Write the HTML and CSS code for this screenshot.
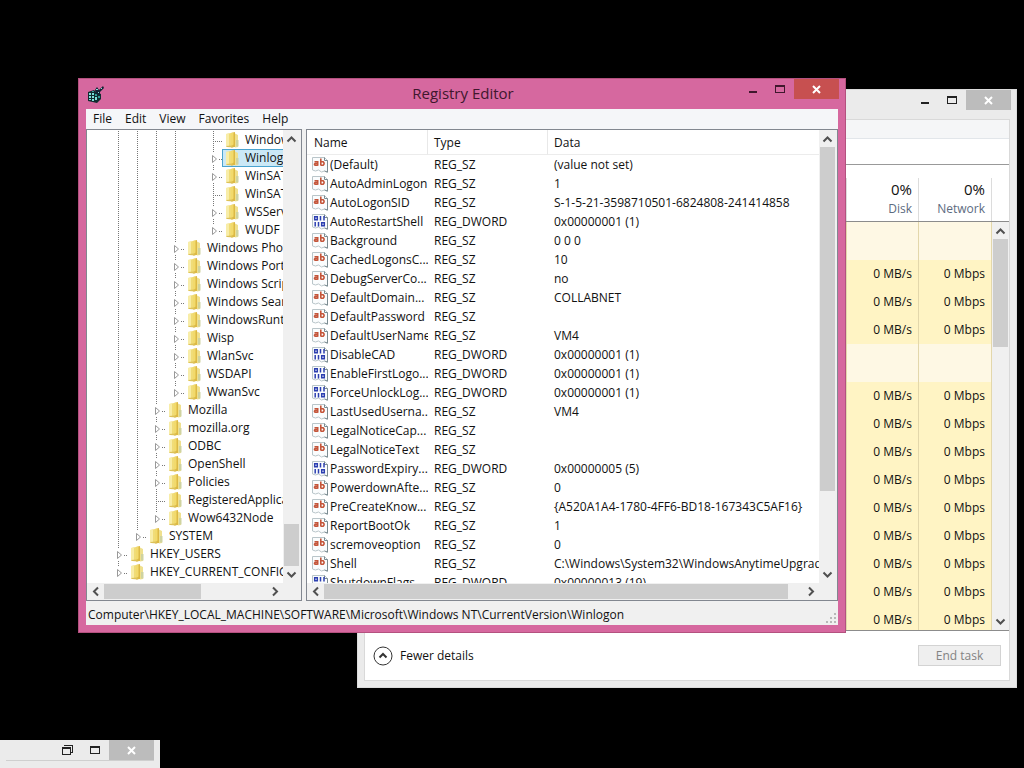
FILE: index.html
```
<!DOCTYPE html>
<html lang="en">
<head>
<meta charset="utf-8">
<title>Registry Editor</title>
<link rel="stylesheet" href="styles.css">
</head>
<body>
<svg class="defs" aria-hidden="true">
  <symbol id="folder" viewBox="0 0 16 16">
    <path d="M2 2l5-1v13l-5 .500z" fill="#f0dc78"/><path d="M2 2l3-.600v12.800l-3 .300z" fill="#f8eda8"/>
    <path d="M7 1l4-1v15l-4 .500z" fill="#dcb944"/><path d="M7 1l2.500-.500v12l-2.500 2z" fill="#f2da6c"/>
    <path d="M11 1.500l3 1.500v12l-3 .500z" fill="#efe08e"/><path d="M12 8h2.500v6.500H12z" fill="#cfd3a0"/>
    <path d="M2 14l6-.500 1 2-6-.500z" fill="#dcc159"/>
  </symbol>
  <symbol id="tri" viewBox="0 0 19 18"><path d="M5 3h10v13H5z" fill="#fff"/><path d="M9.500 6.500v7l4-3.500z" fill="#fff" stroke="#999"/></symbol>
  <symbol id="page" viewBox="0 0 16 16">
    <path d="M.5 .5h12l3 3v12l-3-1.500-3 1-3-2-3 1-3-1z" fill="#fafcfd" stroke="#b9c5c9"/>
    <path d="M12.500 .5v3h3v11.500l-3-1" fill="none" stroke="#7b8b91"/>
  </symbol>
  <symbol id="sz" viewBox="0 0 16 16"><use href="#page"/>
    <g fill="none" stroke="#c4553a" stroke-width="1.600"><path d="M2.500 4.800h3.200v4M5.700 6.500H3.200q-1.500 1 0 1.800h2.500M8.800 1.500v7M8.800 4.800h2.400q1.800 1.700 0 3.500H8.800"/></g>
  </symbol>
  <symbol id="dw" viewBox="0 0 16 16"><use href="#page"/>
    <g fill="none" stroke="#2c3fb0" stroke-width="1.500"><path d="M2.700 2.700h2.600v3H2.700zM8.500 2v4.500M12 2v4.500M3.200 8v4.500M6.500 8v4.500M9.700 8.700h2.600v3H9.700z"/></g>
  </symbol>
  <symbol id="up" viewBox="0 0 17 17"><path d="M4.500 11.500l4-4 4 4" fill="none" stroke="#505050" stroke-width="2"/></symbol>
  <symbol id="down" viewBox="0 0 17 17"><path d="M4.500 6.500l4 4 4-4" fill="none" stroke="#505050" stroke-width="2"/></symbol>
  <symbol id="left" viewBox="0 0 17 17"><path d="M11 4.500l-4 4 4 4" fill="none" stroke="#505050" stroke-width="2"/></symbol>
  <symbol id="right" viewBox="0 0 17 17"><path d="M7 4.500l4 4-4 4" fill="none" stroke="#505050" stroke-width="2"/></symbol>
  <symbol id="min" viewBox="0 0 28 20"><path d="M11 12h8v2h-8z" fill="currentColor"/></symbol>
  <symbol id="max" viewBox="0 0 28 20"><path d="M9 6h10v8H9zM10 8v5h8V8z" fill="currentColor" fill-rule="evenodd"/></symbol>
  <symbol id="restore" viewBox="0 0 28 20"><path d="M11 5h9v8h-2v-1h1V6h-8zM9 7h9v8H9zM10 9v5h7V9z" fill="currentColor" fill-rule="evenodd"/></symbol>
  <symbol id="close" viewBox="0 0 45 20"><path d="M19 7l7 7M26 7l-7 7" stroke="#fff" stroke-width="2"/></symbol>
</svg>

<section class="window task" aria-label="Task Manager">
  <header class="titlebar">
    <span></span><span></span>
    <div class="controls">
      <button aria-label="Minimize"><svg width="28" height="20"><use href="#min"/></svg></button>
      <button aria-label="Maximize"><svg width="28" height="20"><use href="#max"/></svg></button>
      <button class="close" aria-label="Close"><svg width="45" height="20"><use href="#close"/></svg></button>
    </div>
  </header>
  <div class="task-body">
    <div class="task-menu"></div>
    <div class="task-tabs"></div>
    <div class="task-head"><div></div><div><b>0%</b><span>Disk</span></div><div><b>0%</b><span>Network</span></div><div></div></div>
    <div class="task-grid">
      <div class="task-rows">
        <table class="usage">
          <colgroup><col><col class="disk"><col class="net"></colgroup>
          <tbody>
          <tr class="group"><td></td><td></td><td></td></tr>
          <tr><td></td><td>0 MB/s</td><td>0 Mbps</td></tr>
          <tr><td></td><td>0 MB/s</td><td>0 Mbps</td></tr>
          <tr><td></td><td>0 MB/s</td><td>0 Mbps</td></tr>
          <tr class="group"><td></td><td></td><td></td></tr>
          <tr><td></td><td>0 MB/s</td><td>0 Mbps</td></tr>
          <tr><td></td><td>0 MB/s</td><td>0 Mbps</td></tr>
          <tr><td></td><td>0 MB/s</td><td>0 Mbps</td></tr>
          <tr><td></td><td>0 MB/s</td><td>0 Mbps</td></tr>
          <tr><td></td><td>0 MB/s</td><td>0 Mbps</td></tr>
          <tr><td></td><td>0 MB/s</td><td>0 Mbps</td></tr>
          <tr><td></td><td>0 MB/s</td><td>0 Mbps</td></tr>
          <tr><td></td><td>0 MB/s</td><td>0 Mbps</td></tr>
          <tr><td></td><td>0 MB/s</td><td>0 Mbps</td></tr>
          </tbody>
        </table>
      </div>
      <div class="vbar"><button aria-label="Scroll up"><svg><use href="#up"/></svg></button><div class="track"><div class="thumb" style="height:29%"></div></div><button aria-label="Scroll down"><svg><use href="#down"/></svg></button></div>
    </div>
    <footer class="task-foot">
      <button class="fewer"><svg width="20" height="20" viewBox="0 0 20 20" fill="none" stroke="#333"><circle cx="10" cy="10" r="9"/><path d="M6.500 11.500L10 8l3.500 3.500" stroke-width="2"/></svg>Fewer details</button>
      <button class="end" disabled>End task</button>
    </footer>
  </div>
</section>

<section class="window reg" aria-label="Registry Editor">
  <header class="titlebar">
    <svg class="app" width="18" height="18" viewBox="0 0 18 18">
      <path d="M1 7l6-2 2 2 5 2v5l-4 4-9-2z" fill="#102c30"/>
      <path d="M2 8h2v2H2zM5 8h2v2H5zM2 11h2v2H2zM5 11h2v2H5zM2 14h2v1H2zM5 14h2v2H5zM8 12h2v3H8z" fill="#7fe0da"/>
      <path d="M5 6h2v1H5zM8 9h2v2H8zM11 11h2v2h-2z" fill="#2f9c98"/>
      <path d="M8 5l2-3 2 3 4-4 1 2-4 4v3l-4-1z" fill="#123"/>
      <path d="M9 4h2v1H9zM14 3h1v1h-1zM11 7h1v1h-1z" fill="#8adcd8"/>
    </svg>
    <h1>Registry Editor</h1>
    <div class="controls">
      <button aria-label="Minimize"><svg width="28" height="20"><use href="#min"/></svg></button>
      <button aria-label="Maximize"><svg width="28" height="20"><use href="#max"/></svg></button>
      <button class="close" aria-label="Close"><svg width="45" height="20"><use href="#close"/></svg></button>
    </div>
  </header>
  <nav class="menu"><button>File</button><button>Edit</button><button>View</button><button>Favorites</button><button>Help</button></nav>
  <main class="panes">
    <div class="pane">
      <div class="upper">
        <ul class="tree">
          <li><i></i><i></i><i></i><i></i><i class="no"></i><i class="h"></i><span><svg><use href="#folder"/></svg>Windows</span></li>
          <li><i></i><i></i><i></i><i></i><i class="no"></i><i class="x"><svg><use href="#tri"/></svg></i><span class="sel"><svg><use href="#folder"/></svg>Winlogon</span></li>
          <li><i></i><i></i><i></i><i></i><i class="no"></i><i class="x"><svg><use href="#tri"/></svg></i><span><svg><use href="#folder"/></svg>WinSAT</span></li>
          <li><i></i><i></i><i></i><i></i><i class="no"></i><i class="h"></i><span><svg><use href="#folder"/></svg>WinSATAPI</span></li>
          <li><i></i><i></i><i></i><i></i><i class="no"></i><i class="x"><svg><use href="#tri"/></svg></i><span><svg><use href="#folder"/></svg>WSService</span></li>
          <li><i></i><i></i><i></i><i></i><i class="no"></i><i class="x last"><svg><use href="#tri"/></svg></i><span><svg><use href="#folder"/></svg>WUDF</span></li>
          <li><i></i><i></i><i></i><i class="x"><svg><use href="#tri"/></svg></i><span><svg><use href="#folder"/></svg>Windows Photo Viewer</span></li>
          <li><i></i><i></i><i></i><i class="x"><svg><use href="#tri"/></svg></i><span><svg><use href="#folder"/></svg>Windows Portable Devices</span></li>
          <li><i></i><i></i><i></i><i class="x"><svg><use href="#tri"/></svg></i><span><svg><use href="#folder"/></svg>Windows Script Host</span></li>
          <li><i></i><i></i><i></i><i class="x"><svg><use href="#tri"/></svg></i><span><svg><use href="#folder"/></svg>Windows Search</span></li>
          <li><i></i><i></i><i></i><i class="x"><svg><use href="#tri"/></svg></i><span><svg><use href="#folder"/></svg>WindowsRuntime</span></li>
          <li><i></i><i></i><i></i><i class="x"><svg><use href="#tri"/></svg></i><span><svg><use href="#folder"/></svg>Wisp</span></li>
          <li><i></i><i></i><i></i><i class="x"><svg><use href="#tri"/></svg></i><span><svg><use href="#folder"/></svg>WlanSvc</span></li>
          <li><i></i><i></i><i></i><i class="x"><svg><use href="#tri"/></svg></i><span><svg><use href="#folder"/></svg>WSDAPI</span></li>
          <li><i></i><i></i><i></i><i class="x last"><svg><use href="#tri"/></svg></i><span><svg><use href="#folder"/></svg>WwanSvc</span></li>
          <li><i></i><i></i><i class="x"><svg><use href="#tri"/></svg></i><span><svg><use href="#folder"/></svg>Mozilla</span></li>
          <li><i></i><i></i><i class="x"><svg><use href="#tri"/></svg></i><span><svg><use href="#folder"/></svg>mozilla.org</span></li>
          <li><i></i><i></i><i class="x"><svg><use href="#tri"/></svg></i><span><svg><use href="#folder"/></svg>ODBC</span></li>
          <li><i></i><i></i><i class="x"><svg><use href="#tri"/></svg></i><span><svg><use href="#folder"/></svg>OpenShell</span></li>
          <li><i></i><i></i><i class="x"><svg><use href="#tri"/></svg></i><span><svg><use href="#folder"/></svg>Policies</span></li>
          <li><i></i><i></i><i class="h"></i><span><svg><use href="#folder"/></svg>RegisteredApplications</span></li>
          <li><i></i><i></i><i class="x last"><svg><use href="#tri"/></svg></i><span><svg><use href="#folder"/></svg>Wow6432Node</span></li>
          <li><i></i><i class="x last"><svg><use href="#tri"/></svg></i><span><svg><use href="#folder"/></svg>SYSTEM</span></li>
          <li><i class="x"><svg><use href="#tri"/></svg></i><span><svg><use href="#folder"/></svg>HKEY_USERS</span></li>
          <li><i class="x last"><svg><use href="#tri"/></svg></i><span><svg><use href="#folder"/></svg>HKEY_CURRENT_CONFIG</span></li>
        </ul>
        <div class="vbar"><button aria-label="Scroll up"><svg><use href="#up"/></svg></button><div class="track end-track"><div class="thumb" style="height:10%"></div></div><button aria-label="Scroll down"><svg><use href="#down"/></svg></button></div>
      </div>
      <div class="hbar"><button aria-label="Scroll left"><svg><use href="#left"/></svg></button><div class="track"><div class="thumb" style="width:60%"></div></div><button aria-label="Scroll right"><svg><use href="#right"/></svg></button></div>
    </div>
    <div class="pane">
      <div class="upper">
        <div class="list">
          <table class="values">
            <colgroup><col class="c1"><col class="c2"><col></colgroup>
            <thead><tr><th>Name</th><th>Type</th><th>Data</th></tr></thead>
            <tbody>
            <tr><td><svg><use href="#sz"/></svg>(Default)</td><td>REG_SZ</td><td>(value not set)</td></tr>
            <tr><td><svg><use href="#sz"/></svg>AutoAdminLogon</td><td>REG_SZ</td><td>1</td></tr>
            <tr><td><svg><use href="#sz"/></svg>AutoLogonSID</td><td>REG_SZ</td><td>S-1-5-21-3598710501-6824808-241414858</td></tr>
            <tr><td><svg><use href="#dw"/></svg>AutoRestartShell</td><td>REG_DWORD</td><td>0x00000001 (1)</td></tr>
            <tr><td><svg><use href="#sz"/></svg>Background</td><td>REG_SZ</td><td>0 0 0</td></tr>
            <tr><td><svg><use href="#sz"/></svg>CachedLogonsC...</td><td>REG_SZ</td><td>10</td></tr>
            <tr><td><svg><use href="#sz"/></svg>DebugServerCo...</td><td>REG_SZ</td><td>no</td></tr>
            <tr><td><svg><use href="#sz"/></svg>DefaultDomain...</td><td>REG_SZ</td><td>COLLABNET</td></tr>
            <tr><td><svg><use href="#sz"/></svg>DefaultPassword</td><td>REG_SZ</td><td></td></tr>
            <tr><td><svg><use href="#sz"/></svg>DefaultUserName</td><td>REG_SZ</td><td>VM4</td></tr>
            <tr><td><svg><use href="#dw"/></svg>DisableCAD</td><td>REG_DWORD</td><td>0x00000001 (1)</td></tr>
            <tr><td><svg><use href="#dw"/></svg>EnableFirstLogo...</td><td>REG_DWORD</td><td>0x00000001 (1)</td></tr>
            <tr><td><svg><use href="#dw"/></svg>ForceUnlockLog...</td><td>REG_DWORD</td><td>0x00000001 (1)</td></tr>
            <tr><td><svg><use href="#sz"/></svg>LastUsedUserna...</td><td>REG_SZ</td><td>VM4</td></tr>
            <tr><td><svg><use href="#sz"/></svg>LegalNoticeCap...</td><td>REG_SZ</td><td></td></tr>
            <tr><td><svg><use href="#sz"/></svg>LegalNoticeText</td><td>REG_SZ</td><td></td></tr>
            <tr><td><svg><use href="#dw"/></svg>PasswordExpiry...</td><td>REG_DWORD</td><td>0x00000005 (5)</td></tr>
            <tr><td><svg><use href="#sz"/></svg>PowerdownAfte...</td><td>REG_SZ</td><td>0</td></tr>
            <tr><td><svg><use href="#sz"/></svg>PreCreateKnow...</td><td>REG_SZ</td><td>{A520A1A4-1780-4FF6-BD18-167343C5AF16}</td></tr>
            <tr><td><svg><use href="#sz"/></svg>ReportBootOk</td><td>REG_SZ</td><td>1</td></tr>
            <tr><td><svg><use href="#sz"/></svg>scremoveoption</td><td>REG_SZ</td><td>0</td></tr>
            <tr><td><svg><use href="#sz"/></svg>Shell</td><td>REG_SZ</td><td>C:\Windows\System32\WindowsAnytimeUpgrade</td></tr>
            <tr><td><svg><use href="#dw"/></svg>ShutdownFlags</td><td>REG_DWORD</td><td>0x00000013 (19)</td></tr>
            </tbody>
          </table>
        </div>
        <div class="vbar"><button aria-label="Scroll up"><svg><use href="#up"/></svg></button><div class="track"><div class="thumb" style="height:82%"></div></div><button aria-label="Scroll down"><svg><use href="#down"/></svg></button></div>
      </div>
      <div class="hbar"><button aria-label="Scroll left"><svg><use href="#left"/></svg></button><div class="track"><div class="thumb" style="width:97%"></div></div><button aria-label="Scroll right"><svg><use href="#right"/></svg></button></div>
    </div>
  </main>
  <footer class="status"><span>Computer\HKEY_LOCAL_MACHINE\SOFTWARE\Microsoft\Windows NT\CurrentVersion\Winlogon</span>
    <svg width="12" height="12" viewBox="0 0 12 12" fill="#b8b8b8"><path d="M9 1h2v2H9zM9 5h2v2H9zM9 9h2v2H9zM5 5h2v2H5zM5 9h2v2H5zM1 9h2v2H1z"/></svg></footer>
</section>

<section class="window mini" aria-label="Minimized window">
  <div class="controls">
    <button aria-label="Restore"><svg width="28" height="20"><use href="#restore"/></svg></button>
    <button aria-label="Maximize"><svg width="28" height="20"><use href="#max"/></svg></button>
    <button class="close" aria-label="Close"><svg width="45" height="20"><use href="#close"/></svg></button>
  </div>
</section>
</body>
</html>
```
FILE: styles.css
```
* { box-sizing: border-box; }
html, body { height: 100%; }
body {
  margin: 0;
  position: relative;
  overflow: hidden;
  background: #000;
  color: #111;
  font: 12px/18px "Open Sans", "Noto Sans", sans-serif;
}
svg { display: block; flex: none; }
.defs { position: absolute; width: 0; height: 0; }
button { margin: 0; padding: 0; border: 0; background: none; color: inherit; font: inherit; }

.window { position: absolute; display: flex; flex-direction: column; }
.titlebar { flex: none; display: grid; grid-template-columns: 1fr auto 1fr; height: 30px; }
.controls { display: flex; justify-content: flex-end; align-items: flex-start; color: #222; }
.close { background: #bcbcbc; }

/* scroll bars */
.vbar, .hbar { display: flex; flex: none; background: #f0f0f0; }
.vbar { flex-direction: column; width: 17px; }
.hbar { height: 17px; margin-right: 17px; }
.vbar svg, .hbar svg { width: 17px; height: 17px; }
.track { flex: 1; display: flex; flex-direction: column; min-height: 0; }
.end-track { justify-content: flex-end; }
.thumb { background: #cdcdcd; }
.vbar .thumb { margin: 0 1px; }
.hbar .thumb { height: 15px; margin: 1px 0; }

/* registry editor */
.reg { inset: 78px 178px 135px 78px; background: #d6689f; border: 1px solid #b4517f; }
.reg .titlebar { padding: 0 6px 0 8px; }
.app { margin-top: 6px; }
.reg h1 { margin: 0; font-size: 15px; line-height: 28px; font-weight: 400; color: #40172d; }
.reg .controls { color: #40172d; }
.reg .close { background: #c75050; }
.menu { flex: none; display: flex; gap: 13px; height: 20px; margin: 0 7px; padding: 0 7px; background: #f5f6f9; line-height: 20px; }
.panes { flex: 1; min-height: 0; display: grid; grid-template-columns: 216px 1fr; gap: 4px; margin: 0 7px; background: #f0f0f0; }
.pane { min-width: 0; min-height: 0; display: flex; flex-direction: column; padding-right: 1px; border: 1px solid #828790; background: #f0f0f0; }
.upper { flex: 1; min-height: 0; display: flex; }
.tree, .list { flex: 1; min-width: 0; min-height: 0; overflow: hidden; background: #fff; }
.tree { margin: 0; padding: 1px 0 0 21px; list-style: none; }
.tree li { display: flex; height: 18px; white-space: nowrap; }
.tree i { flex: none; width: 19px; background: repeating-linear-gradient(#777 0 1px, transparent 1px 2px) 10px 0 / 1px 100% no-repeat; }
.tree .no { background: none; }
.tree .h, .tree .x {
  background: repeating-linear-gradient(#777 0 1px, transparent 1px 2px) 10px 0 / 1px 100% no-repeat,
    repeating-linear-gradient(90deg, #777 0 1px, transparent 1px 2px) 10px 10px / 9px 1px no-repeat;
}
.tree .last {
  background: repeating-linear-gradient(#777 0 1px, transparent 1px 2px) 10px 0 / 1px 50% no-repeat,
    repeating-linear-gradient(90deg, #777 0 1px, transparent 1px 2px) 10px 10px / 9px 1px no-repeat;
}
.tree i svg { width: 19px; height: 18px; }
.tree span { display: flex; align-items: center; gap: 5px; padding-left: 2px; }
.tree span svg { width: 16px; height: 16px; }
.tree .sel { flex: 1; min-width: 0; overflow: hidden; background: #cbe8f6; box-shadow: inset 1px 1px #4aa3cf, inset 0 -1px #4aa3cf; }

.values { width: 100%; table-layout: fixed; border-collapse: separate; border-spacing: 0; }
.c1 { width: 121px; }
.c2 { width: 120px; }
.values th { height: 25px; padding: 2px 6px 0; border-right: 1px solid #e8e8e8; border-bottom: 1px solid #ececec; text-align: left; font-weight: 400; }
.values th:first-child { padding-left: 7px; }
.values th:last-child { border-right: 0; }
.values td { height: 19px; padding: 0 0 0 6px; white-space: nowrap; overflow: hidden; }
.values td:first-child { display: flex; align-items: center; gap: 2px; padding-left: 5px; }
.values svg { width: 16px; height: 16px; }
.status { flex: none; display: flex; justify-content: space-between; align-items: flex-end; height: 24px; margin: 0 7px 7px; padding: 0 1px 1px 2px; background: #f0f0f0; line-height: 18px; white-space: nowrap; }

/* task manager */
.task { inset: 89px 7px 80px 357px; background: #ebebeb; border: 1px solid #dcdcdc; }
.task .titlebar { padding: 0 5px; height: 29px; }
.task-body { flex: 1; min-height: 0; display: flex; flex-direction: column; margin: 0 6px; margin-bottom: 6px; border: 1px solid #d9d9d9; background: #fff; }
.task-menu { flex: none; height: 19px; background: #f5f6f7; border-bottom: 1px solid #e2e6ea; }
.task-tabs { flex: none; height: 26px; border-bottom: 1px solid #999; }
.task-head { flex: none; height: 57px; display: grid; grid-template-columns: 1fr 72px 73px 17px; padding-top: 13px; border-bottom: 1px solid #8c8c8c; text-align: right; }
.task-head div { display: flex; flex-direction: column; padding-right: 6px; border-right: 1px solid #dcdcdc; }
.task-head div:last-child { border: 0; }
.task-head b { font-size: 15px; line-height: 22px; font-weight: 400; }
.task-head span { color: #5c6b80; }
.task-grid { flex: 1; min-height: 0; display: flex; border-bottom: 1px solid #8c8c8c; }
.task-rows { flex: 1; min-height: 0; overflow: hidden; background: #fff2c0; }
.usage { width: 100%; table-layout: fixed; border-collapse: separate; border-spacing: 0; }
.disk { width: 72px; }
.net { width: 73px; }
.usage td { height: 28px; padding: 0 6px 0 0; border-right: 1px solid #e3d7ab; background: #fff4c4; text-align: right; }
.usage .group td { height: 38px; background: #fef8e4; }
.task-foot { flex: none; display: flex; align-items: center; justify-content: space-between; height: 49px; padding: 0 8px; }
.fewer { display: flex; align-items: center; gap: 7px; }
.end { width: 83px; height: 21px; border: 1px solid #d3d3d3; background: #efefef; color: #838383; }

/* minimized window */
.mini { left: 0; bottom: 0; width: 160px; height: 28px; padding: 0 6px; background: #ebebeb; }
.mini .controls { border-bottom: 1px solid #cfcfcf; }
```
